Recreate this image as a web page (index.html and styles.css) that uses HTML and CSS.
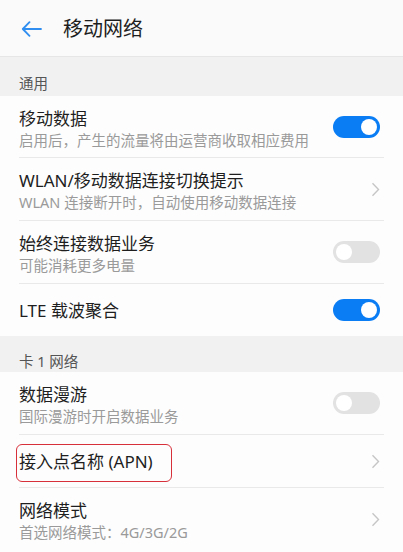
FILE: index.html
```html
<!DOCTYPE html>
<html>
<head>
	<meta charset="utf-8">
	<title>移动网络</title>
	<link rel="stylesheet" href="styles.css">
</head>
<body>
	<div class="header">
		<svg class="back" width="21" height="16" viewBox="0 0 21 16">
			<path d="M20 8H2M8.5 1.2L1.8 8l6.7 6.8" fill="none" stroke="#2f8ef0" stroke-width="1.8" stroke-linecap="round" stroke-linejoin="round"/>
		</svg>
		<span class="title">移动网络</span>
	</div>

	<div class="group first">通用</div>
	<div class="list">
		<div class="item top">
			<div class="text">
				<div class="name">移动数据</div>
				<div class="desc">启用后，产生的流量将由运营商收取相应费用</div>
			</div>
			<span class="switch on"></span>
		</div>
		<div class="item">
			<div class="text">
				<div class="name">WLAN/移动数据连接切换提示</div>
				<div class="desc">WLAN 连接断开时，自动使用移动数据连接</div>
			</div>
			<svg class="arrow" width="9" height="15" viewBox="0 0 9 15"><path d="M1.5 1.2L7.5 7.5l-6 6.3" fill="none" stroke="#c6c6c6" stroke-width="1.4"/></svg>
		</div>
		<div class="item">
			<div class="text">
				<div class="name">始终连接数据业务</div>
				<div class="desc">可能消耗更多电量</div>
			</div>
			<span class="switch"></span>
		</div>
		<div class="item single last">
			<div class="text">
				<div class="name">LTE 载波聚合</div>
			</div>
			<span class="switch on"></span>
		</div>
	</div>

	<div class="group">卡 1 网络</div>
	<div class="list">
		<div class="item">
			<div class="text">
				<div class="name">数据漫游</div>
				<div class="desc">国际漫游时开启数据业务</div>
			</div>
			<span class="switch"></span>
		</div>
		<div class="item single apn">
			<div class="text">
				<div class="name">接入点名称 (APN)</div>
			</div>
			<svg class="arrow" width="9" height="15" viewBox="0 0 9 15"><path d="M1.5 1.2L7.5 7.5l-6 6.3" fill="none" stroke="#c6c6c6" stroke-width="1.4"/></svg>
			<span class="mark"></span>
		</div>
		<div class="item last">
			<div class="text">
				<div class="name">网络模式</div>
				<div class="desc">首选网络模式：4G/3G/2G</div>
			</div>
			<svg class="arrow" width="9" height="15" viewBox="0 0 9 15"><path d="M1.5 1.2L7.5 7.5l-6 6.3" fill="none" stroke="#c6c6c6" stroke-width="1.4"/></svg>
		</div>
	</div>
</body>
</html>
```

FILE: styles.css
```css
body{
	margin: 0;
	background-color: #fdfdfd;
	font-family: "Noto Sans", "Noto Sans CJK SC", sans-serif;
	color: #1e1e1e;
}
.header{
	height: 56px;
	display: flex;
	align-items: center;
	background-color: #fafafa;
	border-bottom: 1px solid #e6e6e6;
	box-shadow: 0 1px 2px rgba(0,0,0,0.04);
}
.header .back{
	margin-left: 21px;
	margin-top: 1px;
}
.header .title{
	margin-left: 21px;
	font-size: 20px;
	line-height: 24px;
	margin-top: 2px;
}
.group{
	background-color: #f1f1f1;
	height: 36px;
	padding: 17px 19px 0;
	box-sizing: border-box;
	font-size: 14.5px;
	line-height: 16px;
	color: #555;
}
.group.first{
	height: 39px;
	padding-top: 18px;
}
.list{
	background-color: #fdfdfd;
}
.item{
	position: relative;
	display: flex;
	align-items: center;
	margin: 0 19px;
	padding: 12px 4px 8px 0;
	min-height: 42px;
	border-bottom: 1px solid #e9e9e9;
}
.item.top{
	padding-bottom: 7px;
}
.item.single{
	padding: 0 4px 0 0;
	min-height: 52px;
}
.item.last{
	border-bottom: none;
}
.text{
	flex: 1;
}
.name{
	font-size: 17px;
	line-height: 22px;
}
.desc{
	font-size: 14.5px;
	line-height: 20px;
	color: #9a9a9a;
}
.item.single .name{
	margin-top: 1px;
}
.switch{
	position: relative;
	width: 47px;
	height: 22px;
	border-radius: 11px;
	background-color: #e2e2e2;
	margin-top: -4px;
}
.switch::after{
	content: "";
	position: absolute;
	top: 3px;
	left: 3px;
	width: 16px;
	height: 16px;
	border-radius: 50%;
	background-color: #fff;
}
.switch.on{
	background-color: #0a7df5;
}
.switch.on::after{
	left: 28px;
}
.item.single .switch{
	margin-top: 0;
}
.arrow{
	margin-top: -4px;
}
.item.single .arrow{
	margin-top: 0;
}
.mark{
	position: absolute;
	left: -3px;
	top: 9px;
	width: 156px;
	height: 38px;
	border: 1.5px solid #d8303a;
	border-radius: 6px;
	box-sizing: border-box;
}
```
